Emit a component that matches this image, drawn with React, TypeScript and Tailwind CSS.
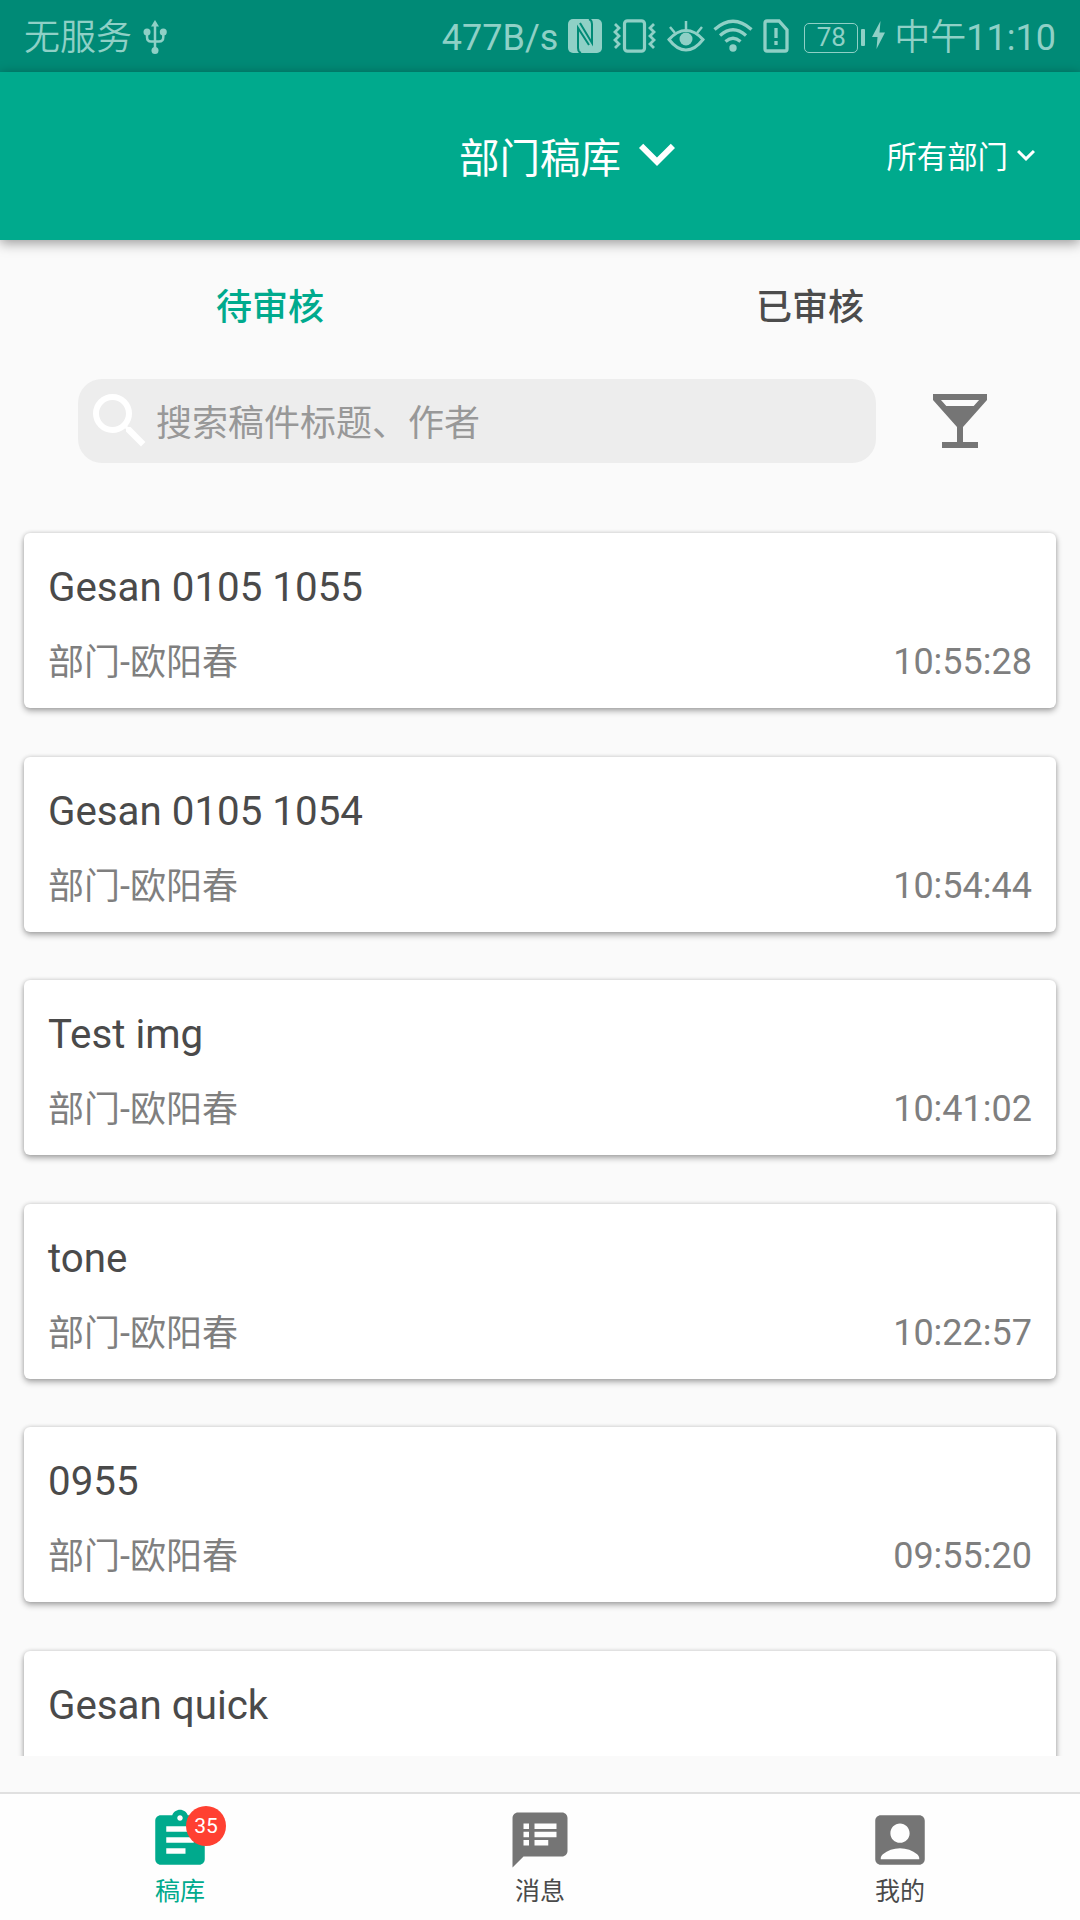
import { useState } from "react";
import type { IconType } from "react-icons";
import {
  MdAccountBox,
  MdAssignment,
  MdKeyboardArrowDown,
  MdLocalBar,
  MdSearch,
  MdSpeakerNotes,
} from "react-icons/md";

type Draft = {
  title: string;
  author?: string;
  time?: string;
};

const drafts: Draft[] = [
  { title: "Gesan 0105 1055", author: "部门-欧阳春", time: "10:55:28" },
  { title: "Gesan 0105 1054", author: "部门-欧阳春", time: "10:54:44" },
  { title: "Test img", author: "部门-欧阳春", time: "10:41:02" },
  { title: "tone", author: "部门-欧阳春", time: "10:22:57" },
  { title: "0955", author: "部门-欧阳春", time: "09:55:20" },
  { title: "Gesan quick" },
];

const tabs = ["待审核", "已审核"];

export default function App() {
  const [tab, setTab] = useState(0);

  return (
    <div className="flex h-[1920px] w-[1080px] flex-col overflow-hidden bg-[#fafafa] font-[Roboto,'Noto_Sans_CJK_SC',sans-serif]">
      <StatusBar />
      <Header />

      <div className="flex h-[132px] shrink-0">
        {tabs.map((label, i) => (
          <button
            key={label}
            onClick={() => setTab(i)}
            className={
              "flex-1 pt-1 text-[36px] leading-[128px] font-medium " +
              (tab === i ? "text-[#00aa8d]" : "text-[#4c4c4c]")
            }
          >
            {label}
          </button>
        ))}
      </div>

      <div className="flex shrink-0 items-center pt-[7px] pl-[78px]">
        <div className="flex h-[84px] w-[798px] items-center rounded-[24px] bg-[#ededed] pl-[6px]">
          <MdSearch className="size-[72px] text-white" />
          <span className="pt-[5px] text-[36px] leading-[48px] text-[#989898]">搜索稿件标题、作者</span>
        </div>
        <MdLocalBar className="ml-12 size-[72px] text-[#757575]" />
      </div>

      <div className="mt-[60px] flex h-[1233px] shrink-0 flex-col gap-[48.5px] overflow-hidden px-6 pt-[10px]">
        {drafts.map((draft) => (
          <DraftCard key={draft.title} draft={draft} />
        ))}
      </div>

      <nav className="mt-auto flex h-[128px] shrink-0 border-t-2 border-[#e0e0e0] bg-[#fefefe]">
        <NavItem icon={MdAssignment} label="稿库" active badge={35} />
        <NavItem icon={MdSpeakerNotes} label="消息" />
        <NavItem icon={MdAccountBox} label="我的" />
      </nav>
    </div>
  );
}

function Header() {
  return (
    <header className="z-10 grid h-[168px] shrink-0 grid-cols-[1fr_auto_1fr] items-center bg-[#00aa8d] text-white shadow-[0_3px_12px_rgba(0,0,0,0.4)]">
      <div />
      <button className="flex items-center pb-[4px] pl-[72px]">
        <span className="pt-[9px] text-[40.5px] leading-[56px]">部门稿库</span>
        <MdKeyboardArrowDown className="size-[72px]" />
      </button>
      <button className="flex items-center justify-end pr-9">
        <span className="pt-[4px] text-[30.4px] leading-[44px]">所有部门</span>
        <MdKeyboardArrowDown className="mb-[3px] size-9" />
      </button>
    </header>
  );
}

function DraftCard({ draft }: { draft: Draft }) {
  return (
    <div className="h-[175px] shrink-0 rounded-[6px] bg-white px-6 pt-[31px] shadow-[0_3px_6px_rgba(0,0,0,0.32),0_0_4px_rgba(0,0,0,0.14)]">
      <p className="text-[40.3px] leading-[48px] text-[#4a4a4a]">{draft.title}</p>
      {draft.author && (
        <div className="mt-[26px] flex justify-between text-[36px] leading-[48px] text-[#7f7f7f]">
          <span className="pt-px">{draft.author}</span>
          <span>{draft.time}</span>
        </div>
      )}
    </div>
  );
}

type NavItemProps = {
  icon: IconType;
  label: string;
  active?: boolean;
  badge?: number;
};

function NavItem({ icon: Icon, label, active, badge }: NavItemProps) {
  return (
    <button
      className={
        "flex flex-1 flex-col items-center pt-[13px] " +
        (active ? "text-[#00aa8d]" : "text-[#757575]")
      }
    >
      <div className="relative">
        <Icon className="size-[66px]" />
        {badge && (
          <span className="absolute -top-px left-[39px] size-10 rounded-full bg-[#ff4031] text-center text-[21px] leading-[41px] text-white">
            {badge}
          </span>
        )}
      </div>
      <span className={"pt-px text-[25px] leading-[36px] " + (active ? "" : "text-[#4a4a4a]")}>{label}</span>
    </button>
  );
}

function StatusBar() {
  return (
    <div className="flex h-[72px] shrink-0 items-center justify-between bg-[#008a76] pr-6 pl-6 text-[36px] leading-[68px] text-[#8fd0c6]">
      <div className="flex items-center">
        <span className="pt-1 font-[350]">无服务</span>
        {/* usb */}
        <svg width="24" height="36" viewBox="0 0 24 36" className="ml-[11px] mt-0.5" fill="currentColor">
          <circle cx="12" cy="31.500" r="3.500" />
          <path d="M12 1l4 6.500H8z" />
          <circle cx="4" cy="13" r="3.500" />
          <circle cx="20.300" cy="13" r="3.500" />
          <path d="M12 6v24M4 14v4q0 4.500 4 4.500h8q4.300 0 4.300-4.500v-4" fill="none" stroke="currentColor" strokeWidth="2.500" />
        </svg>
      </div>

      <div className="flex items-center">
        <span className="pt-1">477B/s</span>
        {/* nfc */}
        <svg width="34" height="34" viewBox="0 0 34 34" className="ml-[10px]">
          <rect width="34" height="34" rx="5" fill="currentColor" />
          <path
            d="M13 34q-3-1-3-5V9l11 17M21 0q3 1 3 5v19L12 4"
            fill="none"
            stroke="#008a76"
            strokeWidth="2"
          />
        </svg>
        {/* vibrate */}
        <svg width="43" height="34" viewBox="0 0 43 34" className="ml-[11px]" fill="none" stroke="currentColor" strokeWidth="3.200">
          <rect x="11.500" y="1.800" width="20" height="30.400" rx="3" />
          <path d="M2 5l4 4-4 4 4 4-4 4 4 4-4 4M41 5l-4 4 4 4-4 4 4 4-4 4 4 4" strokeWidth="2.800" />
        </svg>
        {/* eye comfort */}
        <svg width="38" height="34" viewBox="0 0 38 34" className="ml-[11px]" fill="none" stroke="currentColor" strokeWidth="3">
          <path d="M2 20.500Q10 11.500 19 11.500T36 20.500Q28 31 19 31T2 20.500z" />
          <circle cx="19" cy="20" r="6.500" fill="currentColor" stroke="none" />
          <path d="M19 2v9M3 8l5 6M35 8l-5 6" strokeWidth="2.500" />
        </svg>
        {/* wifi */}
        <svg width="40" height="34" viewBox="0 0 40 34" className="ml-2" fill="none" stroke="currentColor" strokeWidth="3.300">
          <path d="M1.500 10.500Q20-6 38.500 10.500M7 16.500Q20 5 33 16.500M12.500 22.500Q20 16 27.500 22.500" />
          <circle cx="20" cy="29" r="3.700" fill="currentColor" stroke="none" />
        </svg>
        {/* sim alert */}
        <svg width="26" height="34" viewBox="0 0 26 34" className="ml-[10px]" fill="none" stroke="currentColor" strokeWidth="3.300">
          <path d="M4 2h12l8 9v19q0 2-2 2H4q-2 0-2-2V4q0-2 2-2z" />
          <path d="M13 9v10M13 22v4" />
        </svg>
        {/* battery */}
        <div className="mt-[3px] ml-[15px] flex h-[30px] w-[54px] items-center justify-center rounded-[5px] border-[1.5px] border-current text-[26px] leading-[27px]">
          78
        </div>
        <div className="mt-[3px] ml-[3px] h-[17px] w-1 rounded-[1px] bg-current" />
        <svg width="13" height="28" viewBox="0 0 13 28" className="mr-[9px] ml-[7px] mb-0.5" fill="currentColor">
          <path d="M8.500 0L0 16h5.500L4.500 28 13 11.500H7.500z" />
        </svg>
        <span className="pt-1 font-[350]">中午</span>
        <span className="pt-1">11:10</span>
      </div>
    </div>
  );
}
